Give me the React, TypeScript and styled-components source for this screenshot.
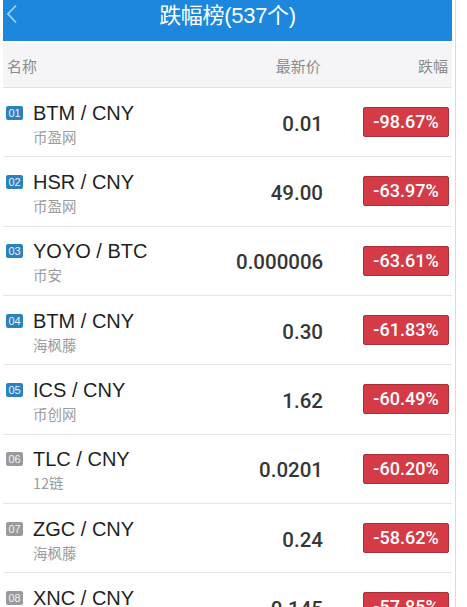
import styled, { createGlobalStyle } from "styled-components"

const GlobalStyle = createGlobalStyle`
  html, body {
    margin: 0;
    padding: 0;
    background: #ffffff;
  }
  body {
    font-family: "Liberation Sans", "Noto Sans CJK SC", sans-serif;
    overflow: hidden;
  }
`

type Coin = {
  pair: string
  market: string
  price: string
  change: string
}

const coins: Coin[] = [
  { pair: "BTM / CNY", market: "币盈网", price: "0.01", change: "-98.67%" },
  { pair: "HSR / CNY", market: "币盈网", price: "49.00", change: "-63.97%" },
  { pair: "YOYO / BTC", market: "币安", price: "0.000006", change: "-63.61%" },
  { pair: "BTM / CNY", market: "海枫藤", price: "0.30", change: "-61.83%" },
  { pair: "ICS / CNY", market: "币创网", price: "1.62", change: "-60.49%" },
  { pair: "TLC / CNY", market: "12链", price: "0.0201", change: "-60.20%" },
  { pair: "ZGC / CNY", market: "海枫藤", price: "0.24", change: "-58.62%" },
  { pair: "XNC / CNY", market: "海枫藤", price: "0.145", change: "-57.85%" },
]

const Page = styled.div`
  display: flex;
  flex-direction: row;
  height: 607px;
  padding-left: 3px;
  overflow: hidden;
`
const Screen = styled.div`
  width: 449px;
  display: flex;
  flex-direction: column;
  overflow: hidden;
  & > * {
    flex-shrink: 0;
  }
`
const EdgeLine = styled.div`
  width: 1px;
  margin-left: 3px;
  background-color: #dcdcdc;
`
const NavBar = styled.div`
  height: 41px;
  background-color: #1c87dc;
  display: flex;
  justify-content: center;
  align-items: flex-start;
  position: relative;
`
const BackButton = styled.div`
  position: absolute;
  left: 2px;
  top: 4px;
  width: 16px;
  height: 20px;
  display: flex;
`
const Title = styled.h1`
  margin: 0;
  padding-top: 3px;
  color: #ffffff;
  font-size: 22px;
  font-weight: 400;
  line-height: 26px;
  letter-spacing: -0.3px;
`
const ColumnHeader = styled.div`
  margin-top: 2px;
  height: 44px;
  background-color: #f5f5f7;
  border-bottom: 1px solid #e2e2e4;
  display: flex;
  align-items: center;
  padding: 0 4px 0 4px;
  color: #8c8c8c;
  font-size: 15px;
`
interface ColumnLabelProps {
  width: number
  alignText?: "left" | "right"
}
const ColumnLabel = styled.div<ColumnLabelProps>`
  width: ${props => `${props.width}px`};
  text-align: ${props => props.alignText || "left"};
  font-family: "Noto Sans CJK SC", sans-serif;
`
const Row = styled.div`
  box-sizing: border-box;
  height: 69.33px;
  border-bottom: 1px solid #e6e6e8;
  display: flex;
  align-items: center;
  padding: 0 3px 0 3px;
`
const NameCell = styled.div`
  width: 230px;
  display: flex;
  align-items: flex-start;
  padding-top: 3px;
`
interface RankProps {
  top: boolean
}
const Rank = styled.span<RankProps>`
  width: 17px;
  height: 14px;
  margin-top: 5px;
  margin-right: 10px;
  border-radius: 2px;
  background-color: ${props => (props.top ? "#2b82bd" : "#9a9a9a")};
  color: #e8f4ff;
  font-family: "Liberation Sans", sans-serif;
  font-size: 11px;
  line-height: 14px;
  text-align: center;
`
const NameText = styled.div`
  display: flex;
  flex-direction: column;
`
const Pair = styled.span`
  color: #1f1f1f;
  font-size: 20px;
  line-height: 24px;
`
const Market = styled.span`
  margin-top: 2px;
  color: #9c9c9c;
  font-family: "Noto Sans CJK SC", sans-serif;
  font-size: 14.5px;
  line-height: 20px;
`
const Price = styled.div`
  width: 87px;
  padding-top: 3px;
  text-align: right;
  font-family: Roboto, sans-serif;
  font-size: 20.5px;
  font-weight: 500;
  color: #363636;
`
const ChangeCell = styled.div`
  flex: 1;
  display: flex;
  justify-content: flex-end;
`
const ChangeBadge = styled.span`
  box-sizing: border-box;
  width: 86px;
  height: 30px;
  border: 1px solid #a9303a;
  border-radius: 2px;
  background-color: #d43b47;
  color: #ffffff;
  font-family: Roboto, sans-serif;
  font-size: 18px;
  font-weight: 500;
  line-height: 28px;
  text-align: center;
`

const App = () => {
  return (
    <Page>
      <GlobalStyle />
      <Screen>
        <NavBar>
          <BackButton>
            <svg width="16" height="20" viewBox="0 0 16 20">
              <path
                d="M11 1.5 L3 10 L11 18.5"
                fill="none"
                stroke="#9fd3ff"
                strokeWidth="1.8"
              />
            </svg>
          </BackButton>
          <Title>跌幅榜(537个)</Title>
        </NavBar>
        <ColumnHeader>
          <ColumnLabel width={270}>名称</ColumnLabel>
          <ColumnLabel width={46} alignText="right">
            最新价
          </ColumnLabel>
          <ColumnLabel width={128} alignText="right">
            跌幅
          </ColumnLabel>
        </ColumnHeader>
        {coins.map((coin, index) => (
          <Row key={`coin-row-${index}-${coin.pair}`}>
            <NameCell>
              <Rank top={index < 5}>{`0${index + 1}`}</Rank>
              <NameText>
                <Pair>{coin.pair}</Pair>
                <Market>{coin.market}</Market>
              </NameText>
            </NameCell>
            <Price>{coin.price}</Price>
            <ChangeCell>
              <ChangeBadge>{coin.change}</ChangeBadge>
            </ChangeCell>
          </Row>
        ))}
      </Screen>
      <EdgeLine />
    </Page>
  )
}

export default App
